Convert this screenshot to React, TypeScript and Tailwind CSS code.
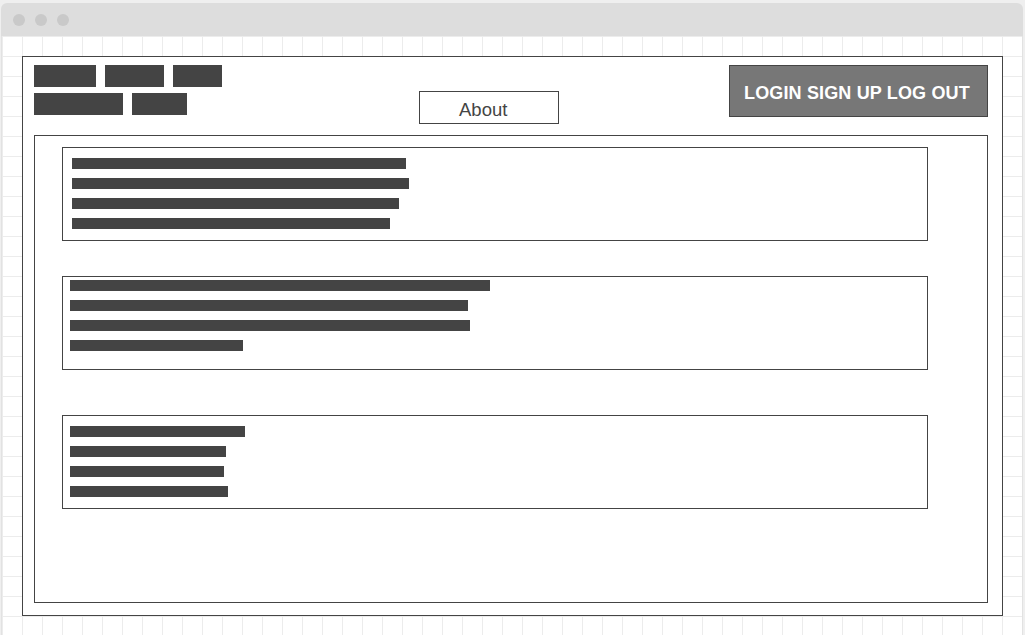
const navRows = [
  [62, 59, 49],
  [89, 55],
];

const cards = [
  { pad: "pt-[10px] pl-[9px]", mt: "", bars: [334, 337, 327, 318] },
  { pad: "pt-[3px] pl-[7px]", mt: "mt-[35px]", bars: [420, 398, 400, 173] },
  { pad: "pt-[10px] pl-[7px]", mt: "mt-[45px]", bars: [175, 156, 154, 158] },
];

export default function App() {
  return (
    <div className="w-[1025px] h-[635px] bg-[#efefef] pt-[3px] pl-[1px] overflow-hidden font-['Liberation_Sans',Arial,sans-serif]">
      <div className="w-[1022px] h-[632px] flex flex-col rounded-t-[6px] overflow-hidden">
        {/* Title bar */}
        <div className="h-[33px] shrink-0 bg-[#dddddd] flex items-center gap-[10px] pl-[12px]">
          <span className="w-[12px] h-[12px] rounded-full bg-[#c9c9c9]" />
          <span className="w-[12px] h-[12px] rounded-full bg-[#c9c9c9]" />
          <span className="w-[12px] h-[12px] rounded-full bg-[#c9c9c9]" />
        </div>

        {/* Grid canvas */}
        <div className="flex-1 bg-white border-l border-r border-[#e2e2e2] bg-[linear-gradient(to_right,#ececec_1px,transparent_1px),linear-gradient(to_bottom,#ececec_1px,transparent_1px)] bg-[size:20px_20px] pl-[20px] pt-[20px]">
          <div className="w-[981px] h-[560px] bg-white border border-[#444] pl-[11px] pr-[14px] pt-[8px]">
            {/* Header */}
            <div className="flex items-start h-[59px]">
              <div className="w-[385px] flex flex-col gap-[6px]">
                {navRows.map((row, i) => (
                  <div key={i} className="flex gap-[9px]">
                    {row.map((w, j) => (
                      <div key={j} className="h-[22px] bg-[#444]" style={{ width: w }} />
                    ))}
                  </div>
                ))}
              </div>
              <div className="mt-[26px] w-[140px] h-[33px] border border-[#444] flex items-center pl-[39px] pt-[4px] text-[18.5px] text-[#444]">
                About
              </div>
              <div className="ml-auto w-[259px] h-[52px] bg-[#777] border border-[#444] flex items-center pl-[14px] pt-[5px] text-[18px] tracking-[0.15px] font-bold text-white whitespace-nowrap">
                LOGIN SIGN UP LOG OUT
              </div>
            </div>

            {/* Content */}
            <div className="mt-[11px] h-[468px] border border-[#444] pl-[27px] pt-[11px]">
              {cards.map((c, i) => (
                <div key={i} className={`${c.mt} w-[866px] h-[94px] border border-[#444] ${c.pad} flex flex-col gap-[9px]`}>
                  {c.bars.map((w, j) => (
                    <div key={j} className="h-[11px] bg-[#444]" style={{ width: w }} />
                  ))}
                </div>
              ))}
            </div>
          </div>
        </div>
      </div>
    </div>
  );
}
